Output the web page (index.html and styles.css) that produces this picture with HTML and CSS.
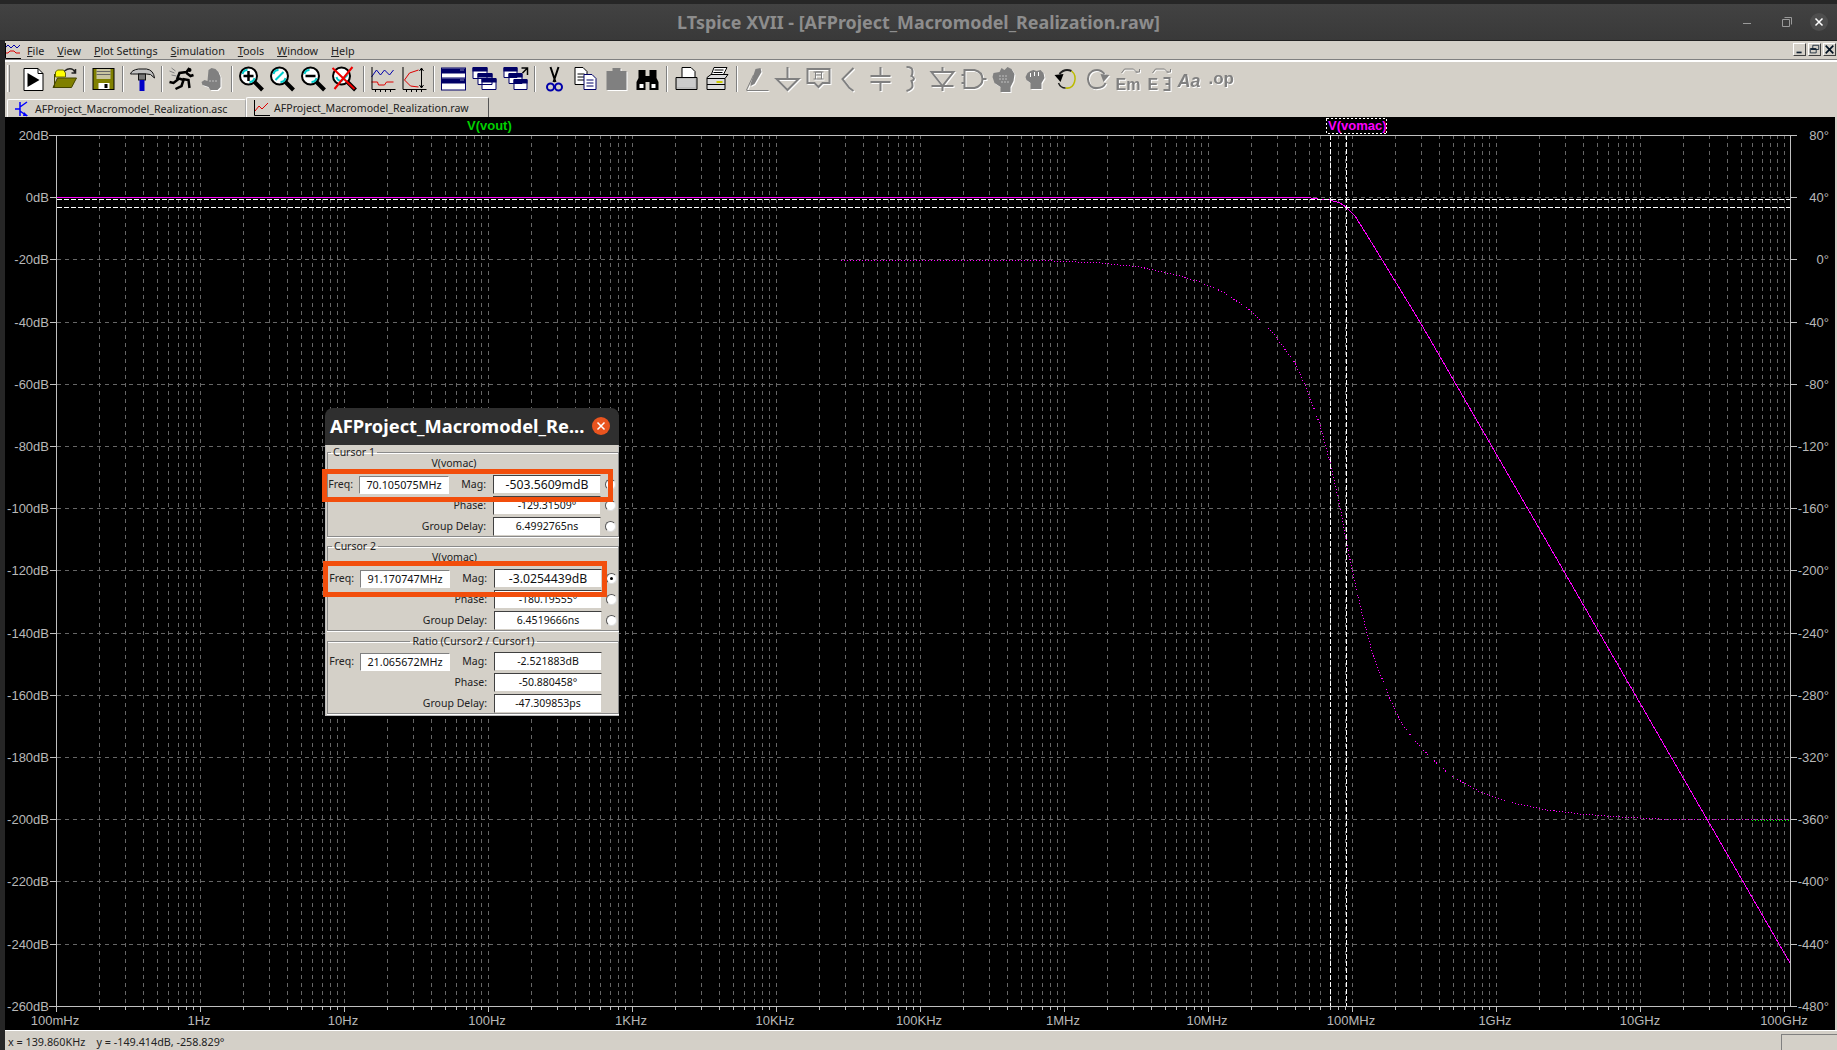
FILE: index.html
```html
<!DOCTYPE html>
<html lang="en">
<head>
    <meta charset="UTF-8">
    <title>LTspice XVII - [AFProject_Macromodel_Realization.raw]</title>
    <link rel="stylesheet" href="styles.css">
</head>
<body>
    <!-- window title -->
    <header class="titlebar">
        <span></span>
        <h1 class="title">LTspice XVII - [AFProject_Macromodel_Realization.raw]</h1>
        <div class="winctl">
            <svg class="winbtn" viewBox="0 0 26 26"><path d="M5 14.500h8" class="wl"/></svg>
            <svg class="winbtn" viewBox="0 0 26 26"><path d="M10.500 10.500h7v7h-7zM12.500 8.500h7v7" class="wl"/></svg>
            <svg class="winbtn closebtn" viewBox="0 0 26 26"><circle cx="13" cy="13" r="9" fill="#4e4e4e"/><path d="M9.500 9.500l7 7M16.500 9.500l-7 7" class="wx"/></svg>
        </div>
    </header>

    <div class="app">
        <!-- menu -->
        <nav class="menubar">
            <svg class="menuicon" viewBox="0 0 16 16"><path d="M0 5l3-3 3 3 3-3 3 3 3-3" class="tb"/><path d="M0 10h3l2-2h4l2 2h4" class="tr"/><path d="M0.500 0v15.500H16" class="tk"/></svg>
            <a><u>F</u>ile</a>
            <a><u>V</u>iew</a>
            <a><u>P</u>lot Settings</a>
            <a><u>S</u>imulation</a>
            <a><u>T</u>ools</a>
            <a><u>W</u>indow</a>
            <a><u>H</u>elp</a>
            <div class="mdi">
                <svg class="mdibtn" viewBox="0 0 13 13"><rect x="3" y="9" width="6" height="2" fill="#123"/></svg>
                <svg class="mdibtn" viewBox="0 0 13 13"><path d="M4.500 1.500h7v5h-7zM1.500 5.500h7v5h-7z" fill="none" stroke="#123"/><path d="M2 6h6" stroke="#123" stroke-width="2"/></svg>
                <svg class="mdibtn" viewBox="0 0 13 13"><path d="M2 2l9 9M11 2l-9 9" stroke="#012" stroke-width="2"/></svg>
            </div>
        </nav>

        <!-- toolbar -->
        <div class="toolbar">
            <i class="grip"></i>
            <svg class="ic" viewBox="0 0 26 26"><path d="M3.500 2.500h14l5 5v17h-19z" fill="#fff" stroke="#000"/><path d="M17.500 2.500v5h5" fill="none" stroke="#000"/><path d="M7 7l12 7-12 7z"/></svg>
            <svg class="ic" viewBox="0 0 26 26"><path d="M4 11V6l2-2h6l2 3v4z" fill="#ff0" stroke="#660"/><path d="M1.500 21.500L6 12h19l-5 9.500z" fill="#808000" stroke="#440"/><path d="M3 21V8" stroke="#440"/><path d="M13 5q5-4 9-1l2 3M24 3v4h-4" fill="none" stroke="#222" stroke-width="1.500"/></svg>
            <i class="sep"></i>
            <svg class="ic" viewBox="0 0 26 26"><rect x="2.500" y="2.500" width="21" height="21" fill="#808000" stroke="#000"/><rect x="6" y="3" width="14" height="10" fill="#c8c4a0"/><path d="M6 5.500h14M6 8.500h14" stroke="#666"/><rect x="8" y="17" width="11" height="6" fill="#fff"/><rect x="14" y="18" width="3" height="4"/></svg>
            <i class="sep"></i>
            <svg class="ic" viewBox="0 0 26 26"><path d="M1 8q1-4 8-5h8q7 1 8 9-4-5-8-4H3z" fill="#c0c0c0" stroke="#111"/><rect x="9" y="8" width="7" height="6" fill="#777" stroke="#111"/><rect x="10" y="14" width="5" height="11" fill="#0000c8"/></svg>
            <i class="sep"></i>
            <svg class="ic" viewBox="0 0 26 26"><path d="M1 5l5 2M3 9l5 1M3 2l4 3" stroke="#808080"/><path d="M21 2l-3 4-7 1-2 5 6 2-2 6-6 3M14 13l6 1 1 8M18 7l4 3 3-1M10 13l-5 4-4-1" fill="none" stroke="#000" stroke-width="2.500"/><circle cx="21" cy="4" r="2"/></svg>
            <svg class="ic off" viewBox="0 0 26 26"><path d="M9 4l3-2 4 1 3 3 2 5v10l-3 3H11l-2-3-6-2-1-3 3-2 3 1z" fill="#808080"/><path d="M10 15h8" stroke="#fff" stroke-dasharray="1 2"/></svg>
            <i class="sep"></i>
            <svg class="ic" viewBox="0 0 26 26"><circle cx="10" cy="10" r="8.500" fill="#fff" stroke="#000" stroke-width="2"/><path d="M4 8q1-4 5-4M16 12q-1 4-5 4" fill="none" stroke="#0cc" stroke-width="2"/><path d="M16 16l8 8" stroke="#000" stroke-width="4"/><path d="M5 10h10M10 5v10" stroke="#000" stroke-width="2.500"/></svg>
            <svg class="ic" viewBox="0 0 26 26"><circle cx="10" cy="10" r="8.500" fill="#fff" stroke="#000" stroke-width="2"/><path d="M4 8q1-4 5-4M16 12q-1 4-5 4M6 14l8-8" fill="none" stroke="#0cc" stroke-width="2"/><path d="M16 16l8 8" stroke="#000" stroke-width="4"/></svg>
            <svg class="ic" viewBox="0 0 26 26"><circle cx="10" cy="10" r="8.500" fill="#fff" stroke="#000" stroke-width="2"/><path d="M4 8q1-4 5-4M16 12q-1 4-5 4" fill="none" stroke="#0cc" stroke-width="2"/><path d="M16 16l8 8" stroke="#000" stroke-width="4"/><path d="M5 10h10" stroke="#000" stroke-width="2.500"/></svg>
            <svg class="ic" viewBox="0 0 26 26"><circle cx="10" cy="10" r="8.500" fill="#fff" stroke="#000" stroke-width="2"/><path d="M5 11q1 4 5 4l6-6" fill="none" stroke="#0cc" stroke-width="2"/><path d="M16 16l8 8" stroke="#000" stroke-width="4"/><path d="M1 2l22 21M21 1L3 23" stroke="#e00" stroke-width="2"/></svg>
            <i class="sep"></i>
            <svg class="ic" viewBox="0 0 26 26"><path d="M1 11l5-7 4 5 4-5 5 5 4-5" class="tb"/><path d="M1 16h6l1 3h6l2-3h7" class="tr"/><path d="M1.500 1v22.500H25M5 24v2M10 24v2M15 24v2M20 24v2" class="tk"/></svg>
            <svg class="ic" viewBox="0 0 26 26"><path d="M1.500 1v22.500H25M5 24v2M10 24v2M15 24v2M20 24v2" class="tk"/><path d="M3 14l5-7 9-3M3 14l6 6 8 1" fill="none" stroke="#d00"/><path d="M20 2v20M18 5l2-3 2 3M18 19l2 3 2-3" class="tk"/></svg>
            <i class="sep"></i>
            <svg class="ic" viewBox="0 0 26 26"><rect x="1" y="2" width="24" height="22" fill="#fff" stroke="#006"/><path d="M1 5h24M1 15h24" stroke="#006" stroke-width="5"/><path d="M1 12h24" stroke="#006" stroke-width="1"/><path d="M20 4h3M20 14h3" stroke="#fff" stroke-dasharray="1 1"/></svg>
            <svg class="ic" viewBox="0 0 26 26"><path d="M1.500 1.500h14v11h-14zM6.500 7.500h14v11h-14zM10.500 12.500h14v11h-14z" fill="#fff" stroke="#006"/><path d="M1 3.500h15M6 9.500h15M10 14.500h15" stroke="#006" stroke-width="4"/></svg>
            <svg class="ic" viewBox="0 0 26 26"><path d="M1.500 1.500h13v10h-13zM6.500 7.500h13v10h-13zM11.500 13.500h13v10h-13z" fill="#fff" stroke="#006"/><path d="M1 3.500h14M6 9.500h14M11 15.500h14" stroke="#006" stroke-width="4"/><path d="M25 9V2h-6M25 2l-5 5" fill="none" stroke="#000" stroke-width="1.500"/></svg>
            <i class="sep"></i>
            <svg class="ic" viewBox="0 0 26 26"><path d="M9 1l5 15M17 1l-5 15" stroke="#000" stroke-width="2"/><circle cx="9" cy="21" r="3.500" fill="none" stroke="#00a" stroke-width="2"/><circle cx="17" cy="21" r="3.500" fill="none" stroke="#00a" stroke-width="2"/></svg>
            <svg class="ic" viewBox="0 0 26 26"><path d="M2.500 1.500h8l4 4v13h-12z" fill="#fff" stroke="#000"/><path d="M5 8h7M5 11h7M5 14h7" stroke="#000"/><path d="M11.500 8.500h8l4 4v11h-12z" fill="#fff" stroke="#006"/><path d="M14 14h7M14 17h7M14 20h7" stroke="#006"/></svg>
            <svg class="ic off" viewBox="0 0 26 26"><path d="M3 5h6V2h8v3h6v19H3z" fill="#808080"/></svg>
            <svg class="ic" viewBox="0 0 26 26"><path d="M4 4h7v6h4V4h7v8l2 4v8h-9v-8h-4v8H2v-8l2-4z"/><path d="M5 18h4v4H5zM17 18h4v4h-4z" fill="#fff"/></svg>
            <i class="sep"></i>
            <svg class="ic" viewBox="0 0 26 26"><path d="M8.500 1.500h9l4 4v8h-13z" fill="#fff" stroke="#000"/><path d="M2.500 11.500h21v12h-21z" fill="#bbb" stroke="#000"/><path d="M4 14h18M4 16h18M4 18h18M4 20h18" stroke="#fff" stroke-dasharray="1 1"/></svg>
            <svg class="ic" viewBox="0 0 26 26"><path d="M9.500 1.500h13l-4 8h-12z" fill="#fff" stroke="#000"/><path d="M10 4h9M9 6.500h9" stroke="#000"/><path d="M2.500 11.500l4-3h17l-3 4v11h-18z" fill="#ddd" stroke="#000"/><path d="M2.500 12.500h18M2.500 18.500h18" stroke="#000"/><rect x="12" y="15" width="6" height="2" fill="#cc0"/></svg>
            <i class="sep"></i>
            <svg class="ic off" viewBox="0 0 26 26"><path d="M7 18L12 3l5-1 1 4-7 12-4 2z" fill="#808080"/><path d="M3 24.500h22M3 24L10 9" stroke="#808080"/></svg>
            <svg class="ic off" viewBox="0 0 26 26"><path d="M13 1v12M2 13h22L13 24z" class="dis"/></svg>
            <svg class="ic off" viewBox="0 0 26 26"><path d="M2 3h22v14h-7l-4 4-4-4H2z" class="dis"/><path d="M10 13V6h6v7M10 9h6M8 6h10M8 13h10" class="dis thin"/></svg>
            <svg class="ic off" viewBox="0 0 26 26"><path d="M17 2L6 13l7 9 4 3" class="dis"/></svg>
            <svg class="ic off" viewBox="0 0 26 26"><path d="M13 1v9M13 16v9M3 10h20M3 16h20" class="dis"/></svg>
            <svg class="ic off" viewBox="0 0 26 26"><path d="M8 1q6 0 6 4t-1 5q5 3 0 5 1 2 1 5t-6 5" class="dis"/></svg>
            <svg class="ic off" viewBox="0 0 26 26"><path d="M13 1v5M13 20v5M2 6h22L13 20zM2 20h22" class="dis"/></svg>
            <svg class="ic off" viewBox="0 0 26 26"><path d="M4 4h10q8 2 8 9t-8 9H4zM1 9h3M1 17h3M22 13h4" class="dis"/></svg>
            <svg class="ic off" viewBox="0 0 26 26"><path d="M2 7l6-1 2-4 3 2 3-3 4 2 3 5-1 7-3 6v6H9v-6l-6-4-2-6z" fill="#808080"/><path d="M8 10h9M8 13h9M10 16h7" stroke="#fff" stroke-dasharray="1 2"/></svg>
            <svg class="ic off" viewBox="0 0 26 26"><path d="M5 7l3-2 3-1 3 1 4-1 3 3 1 5-3 5v6H8v-6l-4-3-1-3z" fill="#808080"/><path d="M8 7v4M12 6v4M16 6v4" stroke="#fff"/></svg>
            <svg class="ic" viewBox="0 0 26 26"><path d="M6 8q5-6 12-3" fill="none" stroke="#222" stroke-width="2"/><path d="M18 5q5 4 3 11t-9 6" fill="none" stroke="#bb0" stroke-width="1.500"/><path d="M12 22q-5 0-7-5" fill="none" stroke="#222" stroke-width="1.500"/><path d="M1 9l9-1-3 8z"/></svg>
            <svg class="ic off" viewBox="0 0 26 26"><path d="M20 8q-5-6-12-3-6 4-4 11t9 6q6 0 8-5" class="dis"/><path d="M25 9l-9-1 3 8z" fill="#808080"/></svg>
            <svg class="ic off" viewBox="0 0 26 26"><path d="M6 7l3-4h9l4 4M20 6h4V3" class="dis thin"/><text x="0" y="24" class="ictext">Em</text></svg>
            <svg class="ic off" viewBox="0 0 26 26"><path d="M6 7l3-4h9l4 4M20 6h4V3" class="dis thin"/><text x="1" y="24" class="ictext">E</text><path d="M17 12h6v12h-6M19 18h4" class="dis"/></svg>
            <svg class="ic off" viewBox="0 0 26 26"><text x="0" y="21" class="ictext ita">Aa</text></svg>
            <svg class="ic off" viewBox="0 0 26 26"><text x="0" y="18" class="ictext big">.op</text></svg>
        </div>

        <!-- document tabs -->
        <div class="tabs">
            <div class="tab">
                <svg class="tabicon" viewBox="0 0 16 16"><path d="M5 1v14M0 8h5M5 6l7-5M5 10l7 5" stroke="#00f" stroke-width="1.500" fill="none"/><path d="M9 11l4 4-5 0z" fill="#00f"/></svg>
                AFProject_Macromodel_Realization.asc
            </div>
            <div class="tab active">
                <svg class="tabicon" viewBox="0 0 16 16"><path d="M1 11l4-5 3 3 6-6" class="tr"/><path d="M0.500 0v15.500H16M4 15v1M8 15v1M12 15v1" class="tk"/></svg>
                AFProject_Macromodel_Realization.raw
            </div>
        </div>

        <!-- waveform plot, svg units are page pixels -->
        <svg class="plot" viewBox="5 117 1830 913">
            <defs>
                <g id="decade">
                    <path class="grid" d="M43 135V1006M69 135V1006M87 135V1006M101 135V1006M112 135V1006M122 135V1006M130 135V1006M137 135V1006M144 135V1006"/>
                    <path class="axis" d="M43 1006v4M69 1006v4M87 1006v4M101 1006v4M112 1006v4M122 1006v4M130 1006v4M137 1006v4M144 1006v6"/>
                </g>
            </defs>

            <use href="#decade" x="56.500"/>
            <use href="#decade" x="200.500"/>
            <use href="#decade" x="344.500"/>
            <use href="#decade" x="488.500"/>
            <use href="#decade" x="632.500"/>
            <use href="#decade" x="776.500"/>
            <use href="#decade" x="920.500"/>
            <use href="#decade" x="1064.500"/>
            <use href="#decade" x="1208.500"/>
            <use href="#decade" x="1352.500"/>
            <use href="#decade" x="1496.500"/>
            <use href="#decade" x="1640.500"/>

            <path class="grid" d="M57 197.500H1790M57 259.500H1790M57 322.500H1790M57 384.500H1790M57 446.500H1790M57 508.500H1790M57 570.500H1790M57 633.500H1790M57 695.500H1790M57 757.500H1790M57 819.500H1790M57 881.500H1790M57 944.500H1790"/>
            <path class="axis" d="M49 135.500H1797M49 1006.500H1797M56.500 135V1012M1790.500 135V1006"/>
            <path class="axis" d="M50 197.500h6M50 259.500h6M50 322.500h6M50 384.500h6M50 446.500h6M50 508.500h6M50 570.500h6M50 633.500h6M50 695.500h6M50 757.500h6M50 819.500h6M50 881.500h6M50 944.500h6"/>
            <path class="axis" d="M1791 197.500h6M1791 259.500h6M1791 322.500h6M1791 384.500h6M1791 446.500h6M1791 508.500h6M1791 570.500h6M1791 633.500h6M1791 695.500h6M1791 757.500h6M1791 819.500h6M1791 881.500h6M1791 944.500h6"/>

            <!-- traces -->
            <polyline class="phase" points="841,260 1000,260 1054,261 1100,263 1140,267 1180,276 1200,282 1223,292 1250,310 1273,333 1295,363 1308,392 1320,425 1330,462 1340,507 1348,550 1355,583 1361,609 1367,633 1373,655 1380,673 1387,692 1395,710 1401,722 1408,732 1419,745 1430,757 1450,775 1480,792 1513,803 1547,810 1580,814 1620,817 1660,819 1790,820"/>
            <path class="phase green" d="M1752 820H1790"/>
            <polyline class="mag" points="57,197.500 1308,197.500 1318,199 1330,200 1340,203 1346,207 1355,216 1370,240 1420,322 1790,963"/>

            <!-- cursors -->
            <path class="cursor" d="M1330.500 135V1006M1346.500 135V1006M57 199.500H1790M57 207.500H1790"/>

            <text class="trace vout" x="467" y="130">V(vout)</text>
            <rect class="tracebox" x="1326.500" y="118.500" width="60" height="15"/>
            <text class="trace vomac" x="1328" y="130">V(vomac)</text>

            <g class="lab end">
                <text x="49" y="139.500">20dB</text>
                <text x="49" y="201.500">0dB</text>
                <text x="49" y="263.500">-20dB</text>
                <text x="49" y="326.500">-40dB</text>
                <text x="49" y="388.500">-60dB</text>
                <text x="49" y="450.500">-80dB</text>
                <text x="49" y="512.500">-100dB</text>
                <text x="49" y="574.500">-120dB</text>
                <text x="49" y="637.500">-140dB</text>
                <text x="49" y="699.500">-160dB</text>
                <text x="49" y="761.500">-180dB</text>
                <text x="49" y="823.500">-200dB</text>
                <text x="49" y="885.500">-220dB</text>
                <text x="49" y="948.500">-240dB</text>
                <text x="49" y="1010.500">-260dB</text>
                <text x="1829" y="139.500">80°</text>
                <text x="1829" y="201.500">40°</text>
                <text x="1829" y="263.500">0°</text>
                <text x="1829" y="326.500">-40°</text>
                <text x="1829" y="388.500">-80°</text>
                <text x="1829" y="450.500">-120°</text>
                <text x="1829" y="512.500">-160°</text>
                <text x="1829" y="574.500">-200°</text>
                <text x="1829" y="637.500">-240°</text>
                <text x="1829" y="699.500">-280°</text>
                <text x="1829" y="761.500">-320°</text>
                <text x="1829" y="823.500">-360°</text>
                <text x="1829" y="885.500">-400°</text>
                <text x="1829" y="948.500">-440°</text>
                <text x="1829" y="1010.500">-480°</text>
            </g>
            <g class="lab mid">
                <text x="55" y="1025">100mHz</text>
                <text x="199" y="1025">1Hz</text>
                <text x="343" y="1025">10Hz</text>
                <text x="487" y="1025">100Hz</text>
                <text x="631" y="1025">1KHz</text>
                <text x="775" y="1025">10KHz</text>
                <text x="919" y="1025">100KHz</text>
                <text x="1063" y="1025">1MHz</text>
                <text x="1207" y="1025">10MHz</text>
                <text x="1351" y="1025">100MHz</text>
                <text x="1495" y="1025">1GHz</text>
                <text x="1640" y="1025">10GHz</text>
                <text x="1784" y="1025">100GHz</text>
            </g>
        </svg>

        <footer class="status">
            <span>x = 139.860KHz &nbsp;&nbsp; y = -149.414dB, -258.829°</span>
            <i class="statuspanel"></i>
        </footer>
    </div>

    <!-- cursor readout window -->
    <section class="dialog">
        <div class="dlgtitle">
            <span>AFProject_Macromodel_Re...</span>
            <svg class="dlgclose" viewBox="0 0 18 18"><circle cx="9" cy="9" r="9" fill="#e9541f"/><path d="M5.500 5.500l7 7M12.500 5.500l-7 7" class="wx"/></svg>
        </div>
        <div class="dlgbody">
            <fieldset class="grp">
                <legend>Cursor 1</legend>
                <div class="trname">V(vomac)</div>
                <div class="rows">
                    <label>Freq:</label><output class="f">70.105075MHz</output><label>Mag:</label><output class="big">-503.5609mdB</output><i class="radio"></i>
                    <label class="wide">Phase:</label><output>-129.31509°</output><i class="radio"></i>
                    <label class="wide">Group Delay:</label><output>6.4992765ns</output><i class="radio"></i>
                </div>
            </fieldset>
            <fieldset class="grp second">
                <legend>Cursor 2</legend>
                <div class="trname">V(vomac)</div>
                <div class="rows">
                    <label>Freq:</label><output class="f">91.170747MHz</output><label>Mag:</label><output class="big">-3.0254439dB</output><i class="radio on"></i>
                    <label class="wide">Phase:</label><output>-180.19555°</output><i class="radio"></i>
                    <label class="wide">Group Delay:</label><output>6.4519666ns</output><i class="radio"></i>
                </div>
            </fieldset>
            <fieldset class="grp third">
                <legend>Ratio (Cursor2 / Cursor1)</legend>
                <div class="rows">
                    <label>Freq:</label><output class="f">21.065672MHz</output><label>Mag:</label><output>-2.521883dB</output><i></i>
                    <label class="wide">Phase:</label><output>-50.880458°</output><i></i>
                    <label class="wide">Group Delay:</label><output>-47.309853ps</output><i></i>
                </div>
            </fieldset>
        </div>
        <!-- orange marks drawn over the screenshot -->
        <div class="mark m1"></div>
        <div class="mark m2"></div>
    </section>
</body>
</html>
```

FILE: styles.css
```css
* {margin:0; padding:0; box-sizing:border-box;}
html, body {width:1837px; height:1050px; overflow:hidden;}
body {
    position:relative;
    background-color:#262626;
    font-family:"Noto Sans", sans-serif;
    color:#222;
}
i {display:block;}

/* title bar */
.titlebar {
    margin-top:4px; height:37px;
    display:grid; grid-template-columns:1fr auto 1fr; align-items:center;
    background:linear-gradient(#424242, #393939);
    border-bottom:1px solid #222;
}
.title {font-size:17.900px; font-weight:700; color:#8d8d8d; white-space:nowrap;}
.winctl {display:flex; justify-content:flex-end; gap:8px; padding-right:5px;}
.winbtn {width:26px; height:26px;}
.wl {fill:none; stroke:#9a9a9a; stroke-width:1;}
.wx {fill:none; stroke:#fff; stroke-width:1.500;}

.app {margin-left:5px; width:1832px; display:flex; flex-direction:column; height:1009px; background-color:#d4d0c8;}

/* menu */
.menubar {
    height:21px; display:flex; align-items:center;
    border-bottom:2px solid #fff; box-shadow:inset 0 -1px 0 #808080;
    font-size:10.800px; position:relative;
}
.menuicon {width:16px; height:16px; margin-right:6px;}
.menubar a {margin-right:13px; white-space:nowrap;}
.mdi {position:absolute; right:1px; top:2px; display:flex; gap:2px;}
.mdibtn {
    width:13px; height:13px;
    border:1px solid; border-color:#fff #404040 #404040 #fff;
}

.tb {fill:none; stroke:#00a; stroke-width:1;}
.tr {fill:none; stroke:#d00; stroke-width:1;}
.tk {fill:none; stroke:#000; stroke-width:1;}

/* toolbar */
.toolbar {height:35px; display:flex; align-items:center; padding:0 0 2px 2px; position:relative;}
.grip {width:3px; height:27px; margin-right:7.500px; border-left:1px solid #fff; border-right:1px solid #808080;}
.ic {width:31px; height:26px; flex:none;}
.off {filter:drop-shadow(1px 1px 0 #fff);}
.sep {width:2px; height:26px; margin:0 3px; border-left:1px solid #808080; border-right:1px solid #fff; flex:none;}
.dis {fill:none; stroke:#808080; stroke-width:2;}
.thin {stroke-width:1;}
.ictext {font:700 16px "Liberation Sans", sans-serif; fill:#808080;}
.ita {font-style:italic; font-size:18px;}
.big {font-size:17px;}

/* tabs */
.tabs {height:20px; display:flex; align-items:flex-end; padding-left:2px; font-size:10.600px;}
.tab {
    width:239px; height:18px;
    display:flex; align-items:center; gap:4px; padding-left:7px;
    border:1px solid #fff; border-bottom:none; border-right-color:#aaa;
    border-radius:2px 2px 0 0;
    white-space:nowrap;
}
.tab.active {width:243px; height:20px; border-right-color:#555;}
.tabicon {width:16px; height:16px; flex:none;}

/* plot */
.plot {display:block; width:1830px; height:913px; background-color:#000; flex:none;}
.grid {fill:none; stroke:#666; stroke-width:1; stroke-dasharray:4 4; shape-rendering:crispEdges;}
.axis {fill:none; stroke:#c0c0c0; stroke-width:1; shape-rendering:crispEdges;}
.mag {fill:none; stroke:#f0f; stroke-width:1; shape-rendering:crispEdges;}
.phase {fill:none; stroke:#f0f; stroke-width:1; stroke-dasharray:1 2; shape-rendering:crispEdges;}
.green {stroke:#0f0;}
.cursor {fill:none; stroke:#fff; stroke-width:1; stroke-dasharray:5 2; shape-rendering:crispEdges;}
.tracebox {fill:none; stroke:#fff; stroke-dasharray:2 2; shape-rendering:crispEdges;}
.trace {font:700 13px "Liberation Sans", sans-serif;}
.vout {fill:#00d000;}
.vomac {fill:#f0f;}
.lab {font:13px "Liberation Sans", sans-serif; fill:#b8b8b8;}
.end {text-anchor:end;}
.mid {text-anchor:middle;}

/* status bar */
.status {
    height:20px; flex:none;
    border-top:1px solid #fff;
    display:flex; justify-content:space-between; align-items:flex-end;
    padding-left:3px; font-size:10.800px; line-height:17px;
}
.statuspanel {width:56px; height:16px; border-top:1px solid #808080; border-left:1px solid #808080;}

/* readout window */
.dialog {position:absolute; left:325px; top:408px; width:294px; height:308px; font-size:10.500px;}
.dlgtitle {
    height:37px; display:flex; align-items:center; justify-content:space-between;
    padding:0 9px 2px 5px;
    background-color:#2f2f2f; border-radius:8px 8px 0 0;
    color:#fff; font-size:18.300px; font-weight:700; white-space:nowrap;
}
.dlgclose {width:18px; height:18px; flex:none;}
.dlgbody {height:271px; background-color:#d4d0c8; border:1px solid #bbb; border-top:none; padding:1px 0 0 1px;}
.grp {
    width:292px; border:1px solid #8a8a8a; box-shadow:0 1px 0 #fff, inset 0 1px 0 #fff;
}
.grp legend {margin-left:3px; padding:0 2px; line-height:12px; font-size:10.500px;}
.second {margin-top:3px; padding-left:1px;}
.third {margin-top:4px; padding:5px 0 0 1px;}
.third legend {margin:0 auto;}
.trname {text-align:center; line-height:11px; margin:0 0 6px; padding-right:38px;}
.rows {display:grid; grid-template-columns:30px 91px 44px 108px 1fr; grid-auto-rows:19px; row-gap:2px; align-items:center;}
.rows label {text-align:right; padding-right:7px; line-height:19px;}
.rows label:first-child {padding-right:5px;}
.rows .wide {grid-column:1 / span 3;}
.rows output {
    display:block; height:19px; line-height:17px; text-align:center;
    background-color:#fff;
    border:1px solid; border-color:#404040 #d4d0c8 #d4d0c8 #404040;
    color:#111; font-size:10.500px;
}
.rows .f {margin-left:1px; height:18px; line-height:16px; border-color:#808080 #fff #fff #808080; font-size:10.800px;}
.rows .big {font-size:12.200px;}
.radio {width:11px; height:11px; margin-left:4px; border-radius:50%; background-color:#fff; border:1px solid; border-color:#555 #ddd #ddd #555; position:relative;}
.radio.on::after {content:''; position:absolute; left:3px; top:3px; width:3px; height:3px; border-radius:50%; background-color:#000;}

.mark {position:absolute; border:5px solid #f24e0c;}
.m1 {left:-3px; top:61px; width:291px; height:33px;}
.m2 {left:-2px; top:153px; width:284px; height:36px;}
```
